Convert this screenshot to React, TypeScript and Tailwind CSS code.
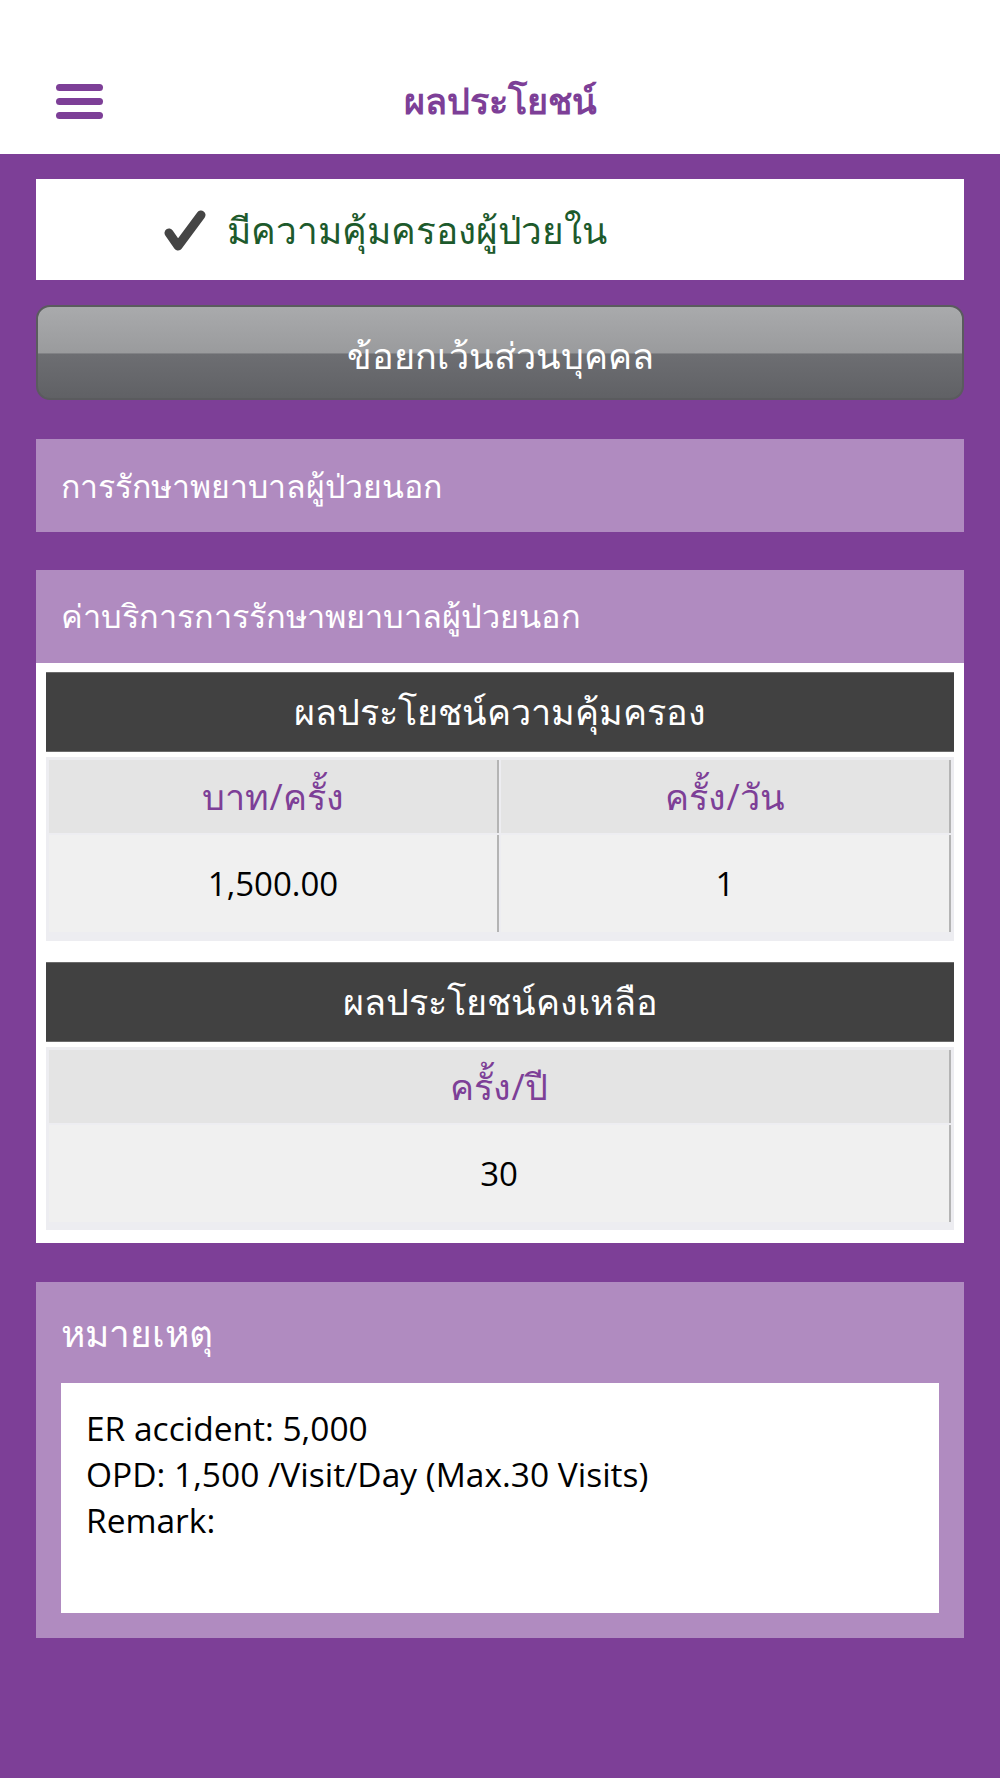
import React from 'react';

const thai = "font-['Open_Sans','Noto_Sans','DejaVu_Sans',sans-serif]";

function TableHead({ children }: { children: React.ReactNode }) {
  return (
    <div className="flex h-[80px] items-center justify-center border-y border-[#6b6b6b] bg-[#414141] text-[36px] text-white">
      {children}
    </div>
  );
}

function Cell({ children, head }: { children: React.ReactNode; head?: boolean }) {
  return (
    <div
      className={
        head
          ? 'flex h-[73px] items-center justify-center border-r-2 border-[#b4b4b4] bg-[#e4e4e4] text-[36px] text-[#7d3f97]'
          : 'flex h-[97px] items-center justify-center border-r-2 border-[#b4b4b4] bg-[#f0f0f0] text-[33px] text-black'
      }
    >
      {children}
    </div>
  );
}

export default function App() {
  return (
    <div className={`min-h-[1778px] bg-[#7d3f97] ${thai}`}>
      {/* Header */}
      <header className="flex h-[154px] items-center bg-white pt-[48px]">
        <div className="flex w-[159px] flex-col gap-[7px] pl-[56px]">
          <span className="block h-[7px] w-[47px] rounded-full bg-[#7d3f97]" />
          <span className="block h-[7px] w-[47px] rounded-full bg-[#7d3f97]" />
          <span className="block h-[7px] w-[47px] rounded-full bg-[#7d3f97]" />
        </div>
        <h1 className="flex-1 text-center text-[36px] font-bold text-[#7d3f97]">ผลประโยชน์</h1>
        <div className="w-[159px]" />
      </header>

      <main className="px-[36px] pt-[25px]">
        {/* Coverage status */}
        <div className="flex h-[101px] items-center bg-white pl-[127px]">
          <svg width="44" height="48" viewBox="0 0 44 48" className="shrink-0">
            <path
              d="M6 27 L15 40 L38 9"
              fill="none"
              stroke="#454545"
              strokeWidth="9"
              strokeLinecap="round"
              strokeLinejoin="round"
            />
          </svg>
          <span className="ml-[20px] text-[37px] text-[#1d5a2c]">มีความคุ้มครองผู้ป่วยใน</span>
        </div>

        {/* Personal exceptions button */}
        <button className="mt-[25px] flex h-[95px] w-full items-center justify-center rounded-[14px] border-2 border-[#5a5b5e] bg-[linear-gradient(to_bottom,#a9aaac_0%,#9a9b9d_50%,#6d6e72_52%,#606165_100%)] pt-[6px] text-[36px] text-white">
          ข้อยกเว้นส่วนบุคคล
        </button>

        {/* Outpatient */}
        <div className="mt-[39px] flex h-[93px] items-center bg-[#b08bc0] px-[25px] text-[32px] text-white">
          การรักษาพยาบาลผู้ป่วยนอก
        </div>

        {/* Outpatient service fee */}
        <section className="mt-[38px]">
          <div className="flex h-[93px] items-center bg-[#b08bc0] px-[25px] text-[32.5px] text-white">
            ค่าบริการการรักษาพยาบาลผู้ป่วยนอก
          </div>
          <div className="bg-white px-[10px] pt-[9px] pb-[13px]">
            <TableHead>ผลประโยชน์ความคุ้มครอง</TableHead>
            <div className="mt-[5px] bg-[#ededf1] px-[3px] pt-[3px] pb-[9px]">
              <div className="grid grid-cols-2 gap-[2px]">
                <Cell head>บาท/ครั้ง</Cell>
                <Cell head>ครั้ง/วัน</Cell>
                <Cell>1,500.00</Cell>
                <Cell>1</Cell>
              </div>
            </div>

            <div className="mt-[21px]">
              <TableHead>ผลประโยชน์คงเหลือ</TableHead>
            </div>
            <div className="mt-[5px] bg-[#ededf1] px-[3px] pt-[3px] pb-[8px]">
              <div className="grid grid-cols-1 gap-[2px]">
                <Cell head>ครั้ง/ปี</Cell>
                <Cell>30</Cell>
              </div>
            </div>
          </div>
        </section>

        {/* Remarks */}
        <section className="mt-[39px] bg-[#b08bc0] px-[25px] pb-[25px]">
          <div className="flex h-[101px] items-center text-[37px] text-white">หมายเหตุ</div>
          <div className="h-[230px] bg-white px-[25px] pt-[22px] text-[33.5px] leading-[46px] text-black">
            <p>ER accident: 5,000</p>
            <p>OPD: 1,500 /Visit/Day (Max.30 Visits)</p>
            <p>Remark:</p>
          </div>
        </section>
      </main>
    </div>
  );
}
